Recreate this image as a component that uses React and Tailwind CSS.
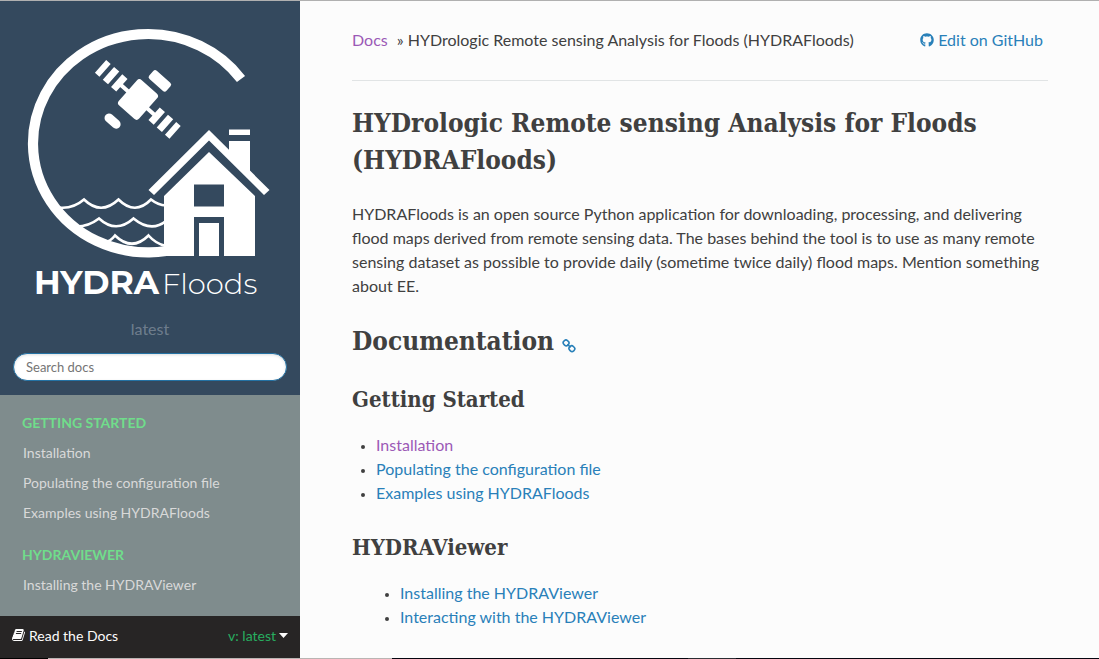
import { FaGithub } from "react-icons/fa";

const gettingStarted = ["Installation", "Populating the configuration file", "Examples using HYDRAFloods"];
const viewer = ["Installing the HYDRAViewer", "Interacting with the HYDRAViewer"];

function Logo() {
  return (
    <svg viewBox="0 0 240 272" className="mx-auto h-[272px] w-[240px] overflow-visible" fill="#fff" role="img" aria-label="HYDRAFloods">
      <path d="M211 50A115 109.200 0 1 0 119.500 223.400Q128 223.300 136 222" fill="none" stroke="#fff" strokeWidth="10.200" />
      <g transform="translate(108 70.500) rotate(41.500)">
        <rect x="-13.500" y="-17" width="27" height="34" rx="3.500" />
        <rect x="-7.500" y="-34" width="23" height="11" rx="2.500" />
        <rect x="-14" y="28.500" width="18.500" height="9" rx="4.500" />
        <path d="M-25-1.500h50v4h-50zM-28.500-8.500h7v17h-7zM-39.500-8.500h7v17h-7zM-50-8.500h6v17h-6zM21.500-8.500h7v17h-7zM32.500-8.500h7v17h-7zM43.500-8.500h6v17h-6z" />
      </g>
      <g fill="none" stroke="#fff" strokeWidth="2.600">
        <path d="M29 178.500Q43 180 54 170.500Q71 187 88.500 170.500Q105 187 121 170.500Q128 176 136 176.500" />
        <path d="M45 197.500Q58 198 69 189.500Q86 205 103.500 189.500Q121 204 136 192" />
        <path d="M75 213Q80 213 85 206.500Q102 223 118.500 206.500Q126 215 136 217" />
      </g>
      <path d="M179 101l60.500 60-5.500 5L179 111.500 124 166l-5.500-5z" />
      <path d="M199 100.500h21v5.500h-21zM199 112h21v31l-21-21z" />
      <path fillRule="evenodd" d="M179 123l46 44v60h-31v-39h-30v39h-30v-60zM164 155.500v22h30v-22z" />
      <path d="M169 194h20v33h-20z" />
      <text x="4" y="265" fontFamily="Montserrat, Inter, sans-serif" fontSize="33" fontWeight="700">HYDRA</text>
      <text x="132" y="265" fontFamily="Montserrat, Inter, sans-serif" fontSize="29" fontWeight="300">Floods</text>
    </svg>
  );
}

function BookIcon() {
  return (
    <svg viewBox="0 0 1792 1792" className="size-[14px]" fill="currentColor" aria-hidden="true">
      <path d="M1639 478q40 57 18 129l-275 906q-19 64-76.500 107.500t-122.500 43.500h-923q-77 0-148.500-53.500t-99.500-131.500q-24-67-2-127 0-4 3-27t4-37q1-8-3-21.500t-3-19.500q2-11 8-21t16.500-23.500 16.500-23.500q23-38 45-91.500t30-91.500q3-10 .5-30t-.5-28q3-11 17-28t17-23q21-36 42-92t25-90q1-9-2.500-32t.5-28q4-13 22-30.500t22-22.500q19-26 42.500-84.500t27.500-96.500q1-8-3-25.500t-2-26.500q2-8 9-18t18-23 17-21q8-12 16.500-30.500t15-35 16-36 19.500-32 26.500-23.500 36-11.500 47.500 5.500l-1 3q38-9 51-9h761q74 0 114 56t18 130l-274 906q-36 119-71.500 153.500t-128.500 34.500h-869q-27 0-38 15-11 16-1 43 24 70 144 70h923q29 0 56-15.500t35-41.500l300-987q7-22 5-57 38 15 59 43zm-1064 2q-4 13 2 22.500t20 9.500h608q13 0 25.500-9.500t16.500-22.500l21-64q4-13-2-22.500t-20-9.500h-608q-13 0-25.500 9.500t-16.500 22.500zm-83 256q-4 13 2 22.500t20 9.500h608q13 0 25.500-9.500t16.500-22.500l21-64q4-13-2-22.500t-20-9.500h-608q-13 0-25.500 9.500t-16.500 22.500z" />
    </svg>
  );
}

function ChainIcon() {
  return (
    <svg viewBox="0 0 14 14" className="size-[14px]" fill="none" stroke="currentColor" strokeWidth="1.600" aria-hidden="true">
      <rect x="1.300" y="1.300" width="5.600" height="5.200" rx="2.300" transform="rotate(45 4.100 3.900)" />
      <rect x="7.100" y="7.100" width="5.600" height="5.200" rx="2.300" transform="rotate(45 9.900 9.700)" />
      <path d="M5.400 5.200l3.200 3.200" />
    </svg>
  );
}

function NavGroup({ title, items }) {
  return (
    <section className="pb-3">
      <h2 className="px-[22px] text-[14px] leading-[30px] font-bold text-[#70dd8b] uppercase">{title}</h2>
      <ul>
        {items.map((item) => (
          <li key={item}>
            <a href="#" className="block px-[23px] text-[14px] leading-[30px] text-[#d9d9d9]">{item}</a>
          </li>
        ))}
      </ul>
    </section>
  );
}

export default function App() {
  return (
    <div className="flex min-h-screen flex-col border-t border-[#b0b0b0] bg-[#fcfcfc] font-['Lato','Liberation_Sans',sans-serif] text-[#404040]">
      <div className="flex grow">
        <aside className="flex w-[300px] shrink-0 flex-col bg-[#7f8c8d]">
          <header className="bg-[#34495e] px-[13px] pt-7 pb-[14px] text-center">
            <a href="#" className="block"><Logo /></a>
            <p className="pt-4 leading-6 text-white/30">latest</p>
            <form className="pt-3">
              <input type="text" aria-label="Search docs" placeholder="Search docs" className="block h-7 w-full rounded-full border border-[#2472a4] bg-white px-3 pb-px text-[13px] shadow-[inset_0_1px_3px_#ddd] placeholder:text-[#757575]" />
            </form>
          </header>
          <nav className="grow pt-[13px]">
            <NavGroup title="Getting Started" items={gettingStarted} />
            <NavGroup title="HYDRAViewer" items={viewer.slice(0, 1)} />
          </nav>
          <footer>
            <button type="button" className="flex h-[42px] w-full items-center justify-between bg-[#272525] px-3 pb-1 text-[14px] text-[#fcfcfc]">
              <span className="flex items-center gap-[3px]"><BookIcon />Read the Docs</span>
              <span className="flex items-center gap-[3px] text-[#27ae60]">
                v: latest
                <svg viewBox="0 0 9 5" className="h-[5px] w-[9px]" fill="#fcfcfc" aria-hidden="true"><path d="M0 0h9L4.500 5z" /></svg>
              </span>
            </button>
          </footer>
        </aside>
        <main className="min-w-0 grow pt-[27px] pr-[51px] pl-[52px]">
          <div className="flex justify-between border-b border-[#e1e4e5] pb-7 leading-6">
            <nav aria-label="Breadcrumb">
              <a href="#" className="mr-[5px] text-[#9b59b6]">Docs</a> » HYDrologic Remote sensing Analysis for Floods (HYDRAFloods)
            </nav>
            <a href="#" className="mr-[5px] flex items-center gap-1 text-[#2980b9]"><FaGithub className="size-[14px]" />Edit on GitHub</a>
          </div>
          <article className="pt-6">
            <h1 className="pb-[23px] font-['Roboto_Slab','DejaVu_Serif_Condensed','DejaVu_Serif',serif] text-[26px] leading-[37px] font-bold">HYDrologic Remote sensing Analysis for Floods (HYDRAFloods)</h1>
            <p className="pb-[25px] leading-6">HYDRAFloods is an open source Python application for downloading, processing, and delivering flood maps derived from remote sensing data. The bases behind the tool is to use as many remote sensing dataset as possible to provide daily (sometime twice daily) flood maps. Mention something about EE.</p>
            <h1 className="flex items-center gap-2 pb-[23px] font-['Roboto_Slab','DejaVu_Serif_Condensed','DejaVu_Serif',serif] text-[26px] leading-[37px] font-bold">
              Documentation
              <a href="#" aria-label="Permalink" className="pt-2 text-[#2980b9]"><ChainIcon /></a>
            </h1>
            <h2 className="pb-[18px] font-['Roboto_Slab','DejaVu_Serif_Condensed','DejaVu_Serif',serif] text-[22px] leading-8 font-bold">Getting Started</h2>
            <ul className="list-disc pb-[26px] pl-6 leading-6 marker:text-[13px]">
              {gettingStarted.map((item, i) => (
                <li key={item}><a href="#" className={i === 0 ? "text-[#9b59b6]" : "text-[#2980b9]"}>{item}</a></li>
              ))}
            </ul>
            <h2 className="pb-[18px] font-['Roboto_Slab','DejaVu_Serif_Condensed','DejaVu_Serif',serif] text-[22px] leading-8 font-bold">HYDRAViewer</h2>
            <ul className="list-disc pl-12 leading-6 marker:text-[13px]">
              {viewer.map((item) => (
                <li key={item}><a href="#" className="text-[#2980b9]">{item}</a></li>
              ))}
            </ul>
          </article>
        </main>
      </div>
      <div className="flex h-px bg-[#05060f]">
        <div className="w-12 bg-black" />
        <div className="w-[344px] bg-[#b9b5b3]" />
        <div className="ml-[296px] w-12 bg-[#2b2d33]" />
      </div>
    </div>
  );
}
